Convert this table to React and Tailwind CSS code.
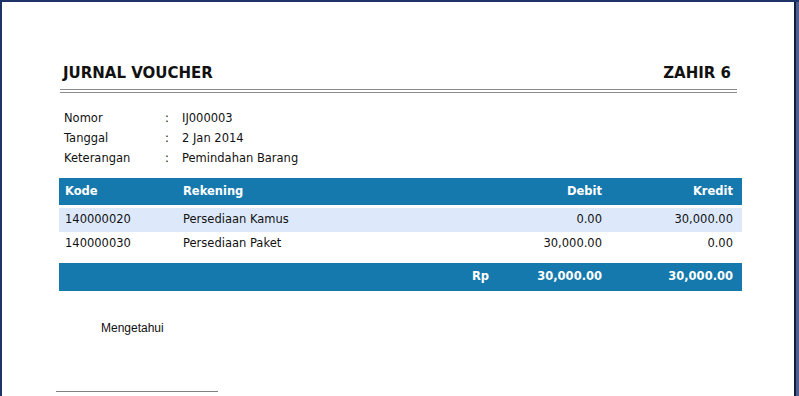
import React from 'react';

const info = [
  { label: 'Nomor', value: 'IJ000003' },
  { label: 'Tanggal', value: '2 Jan 2014' },
  { label: 'Keterangan', value: 'Pemindahan Barang' },
];

const rows = [
  { kode: '140000020', rekening: 'Persediaan Kamus', debit: '0.00', kredit: '30,000.00' },
  { kode: '140000030', rekening: 'Persediaan Paket', debit: '30,000.00', kredit: '0.00' },
];

const font = { fontFamily: '"DejaVu Sans", Tahoma, sans-serif' };

export default function App() {
  return (
    <div className="flex h-[396px] w-[799px] overflow-hidden border-l-2 border-t-2 border-[#1c3468] bg-white">
      <div className="flex-1 pl-[57px] pr-[52px] pt-[61px]" style={font}>
        <div className="mr-[4px] flex items-end justify-between px-[4px] pb-[6px] text-[15px] font-bold leading-[20px] text-[#111]">
          <span>JURNAL VOUCHER</span>
          <span className="pr-[3px]">ZAHIR 6</span>
        </div>
        <div className="mb-[16px] ml-[1px] mr-[5px] h-[4px] border-y border-[#8a8a8a]" />

        <div className="pl-[5px] text-[11.5px] text-[#111]">
          {info.map((r) => (
            <div key={r.label} className="flex h-[20px] items-center">
              <span className="w-[101px]">{r.label}</span>
              <span className="w-[17px]">:</span>
              <span>{r.value}</span>
            </div>
          ))}
        </div>

        <div className="mt-[9px] text-[11.5px]">
          <div className="flex h-[27px] items-center bg-[#1679ad] font-bold text-white">
            <span className="w-[124px] pl-[6px]">Kode</span>
            <span className="flex-1">Rekening</span>
            <span className="w-[100px] text-right">Debit</span>
            <span className="w-[140px] pr-[9px] text-right">Kredit</span>
          </div>
          <div className="mt-[3px]">
            {rows.map((r, i) => (
              <div key={r.kode} className={`flex h-[24px] items-center text-[#111] ${i === 0 ? 'bg-[#dde9fb]' : 'bg-white'}`}>
                <span className="w-[124px] pl-[6px]">{r.kode}</span>
                <span className="flex-1">{r.rekening}</span>
                <span className="w-[100px] text-right">{r.debit}</span>
                <span className="w-[140px] pr-[9px] text-right">{r.kredit}</span>
              </div>
            ))}
          </div>
          <div className="mt-[7px] flex h-[28px] items-center bg-[#1679ad] font-bold text-white">
            <span className="flex-1" />
            <span className="w-[30px]">Rp</span>
            <span className="w-[100px] text-right">30,000.00</span>
            <span className="w-[140px] pr-[9px] text-right">30,000.00</span>
          </div>
        </div>

        <div className="mt-[28px] pl-[42px] text-[12px] text-[#111]" style={{ fontFamily: '"Liberation Sans", Arial, sans-serif' }}>
          Mengetahui
        </div>
        <div className="ml-[-3px] mt-[54px] h-px w-[162px] bg-[#808080]" />
      </div>
      <div className="w-[2px] bg-[#0f1e3d]" />
      <div className="w-[3px] bg-[#4d5f8c]" />
    </div>
  );
}
